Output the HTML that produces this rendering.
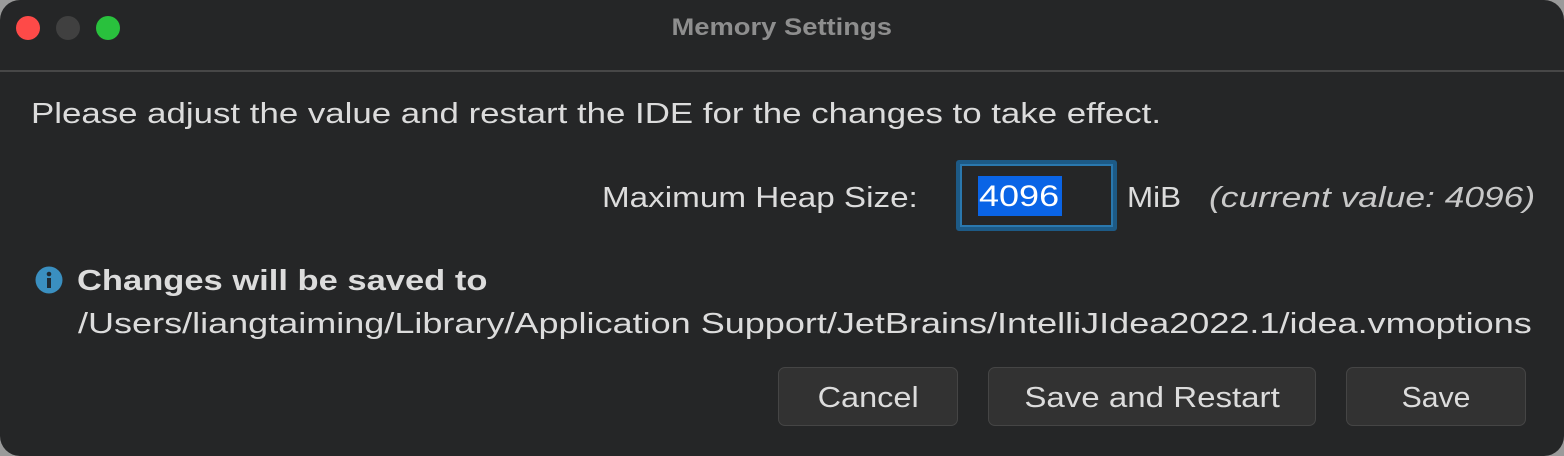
<!DOCTYPE html>
<html><head><style>
html,body{margin:0;padding:0;width:1564px;height:456px;background:#9a9a9a;overflow:hidden}
.win{position:absolute;left:0;top:0;width:1564px;height:456px;background:#252627;border-radius:20px;font-family:"Liberation Sans",sans-serif;color:#dcdcdc}
.t{position:absolute;white-space:nowrap;transform-origin:0 50%}
.dot{position:absolute;top:16px;width:24px;height:24px;border-radius:50%}
.btn{position:absolute;top:367px;height:59px;background:#323232;border:1px solid #454545;border-radius:7px;box-sizing:border-box;font-size:29px;text-align:center;line-height:61px;color:#dcdcdc}
.btn span,.c span{display:inline-block}
</style></head><body>
<div class="win">
<div class="dot" style="left:16px;background:#fe4a48"></div>
<div class="dot" style="left:56px;background:#404040"></div>
<div class="dot" style="left:96px;background:#29c13d"></div>
<div class="t c" style="left:0;width:1564px;text-align:center;top:14px;font-size:24px;font-weight:bold;color:#8e8e8e"><span style="transform:scaleX(1.14)">Memory Settings</span></div>
<div style="position:absolute;left:0;top:70px;width:1564px;height:2px;background:#474747"></div>
<div class="t" style="left:31px;top:98px;font-size:28.5px;transform:scaleX(1.222)">Please adjust the value and restart the IDE for the changes to take effect.</div>
<div class="t" style="left:602px;top:182px;font-size:28.5px;transform:scaleX(1.166)">Maximum Heap Size:</div>
<div style="position:absolute;left:956px;top:160px;width:161px;height:71px;box-sizing:border-box;border:4px solid #1d5a86;border-radius:3px"></div>
<div style="position:absolute;left:960px;top:164px;width:153px;height:63px;box-sizing:border-box;border:2px solid #2a78ae"></div>
<div style="position:absolute;left:978px;top:176px;width:84px;height:40px;background:#0a64e6"></div>
<div class="t" style="left:979px;top:176px;color:#fff;font-size:30px;line-height:42px;transform:scaleX(1.2)">4096</div>
<div class="t" style="left:1127px;top:182px;font-size:28.5px;transform:scaleX(1.1)">MiB</div>
<div class="t" style="left:1209px;top:182px;font-size:28.5px;font-style:italic;color:#c8c8c8;transform:scaleX(1.24)">(current value: 4096)</div>
<svg style="position:absolute;left:35px;top:266px" width="28" height="28"><circle cx="14" cy="14" r="13.5" fill="#3a8fc0"/><circle cx="14" cy="8" r="2.3" fill="#1f2a33"/><rect x="12" y="12" width="4" height="10" fill="#1f2a33"/></svg>
<div class="t" style="left:77px;top:265px;font-size:29px;font-weight:bold;transform:scaleX(1.19)">Changes will be saved to</div>
<div class="t" style="left:78px;top:308px;font-size:28.5px;transform:scaleX(1.264)">/Users/liangtaiming/Library/Application Support/JetBrains/IntelliJIdea2022.1/idea.vmoptions</div>
<div class="btn" style="left:778px;width:180px"><span style="transform:scaleX(1.12)">Cancel</span></div>
<div class="btn" style="left:988px;width:328px"><span style="transform:scaleX(1.14)">Save and Restart</span></div>
<div class="btn" style="left:1346px;width:180px"><span style="transform:scaleX(1.04)">Save</span></div>
</div>
</body></html>
